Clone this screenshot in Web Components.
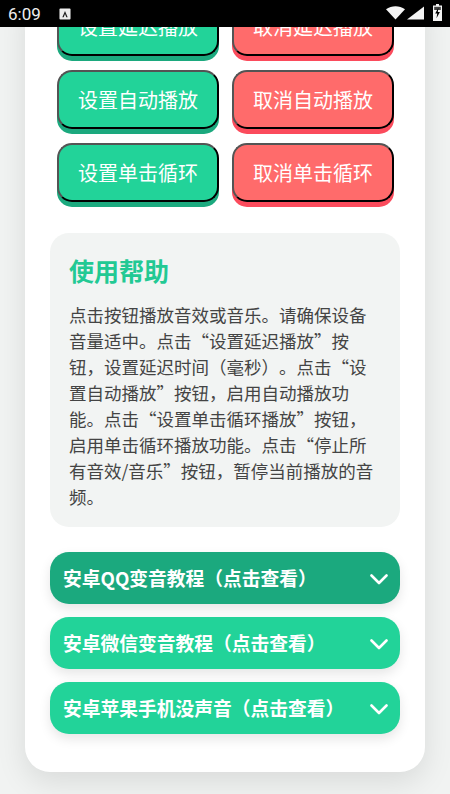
<!DOCTYPE html>
<html lang="zh-CN">
<head>
<meta charset="utf-8">
<title>音效</title>
<style>
  html, body { margin: 0; padding: 0; }
  body {
    width: 450px;
    height: 794px;
    overflow: hidden;
    background: #f1f3f2;
    font-family: "Noto Sans CJK SC", "Noto Sans", sans-serif;
    text-spacing-trim: space-all;
  }
</style>
</head>
<body>
<status-bar time="6:09"></status-bar>
<main-card>
  <div class="buttons" slot="buttons">
    <sound-button>设置延迟播放</sound-button>
    <sound-button kind="cancel">取消延迟播放</sound-button>
    <sound-button>设置自动播放</sound-button>
    <sound-button kind="cancel">取消自动播放</sound-button>
    <sound-button>设置单击循环</sound-button>
    <sound-button kind="cancel">取消单击循环</sound-button>
  </div>
  <help-panel heading="使用帮助" slot="help">点击按钮播放音效或音乐。请确保设备音量适中。点击“设置延迟播放”按钮，设置延迟时间（毫秒）。点击“设置自动播放”按钮，启用自动播放功能。点击“设置单击循环播放”按钮，启用单击循环播放功能。点击“停止所有音效/音乐”按钮，暂停当前播放的音频。</help-panel>
  <guide-item slot="guides" active>安卓QQ变音教程（点击查看）</guide-item>
  <guide-item slot="guides">安卓微信变音教程（点击查看）</guide-item>
  <guide-item slot="guides">安卓苹果手机没声音（点击查看）</guide-item>
</main-card>

<script>
class StatusBar extends HTMLElement {
  constructor() {
    super();
    const shadow = this.attachShadow({ mode: "open" });
    shadow.innerHTML = `
      <style>
        :host {
          display: flex;
          align-items: center;
          position: relative;
          z-index: 2;
          height: 27px;
          padding: 0 8px;
          background: #000;
          color: #eee;
          font: 400 17px Roboto, sans-serif;
        }
        .time { width: 51px; }
        .right { margin-left: auto; display: flex; align-items: center; }
        svg { display: block; }
      </style>
      <span class="time">${this.getAttribute("time")}</span>
      <svg width="12" height="12" viewBox="0 0 13 13">
        <rect x="0.5" y="0.5" width="12" height="12" rx="1" fill="#eee"/>
        <path d="M3.6 10 L6.5 3.2 L9.4 10 H7.9 L6.5 6.4 L5.1 10 Z" fill="#222"/>
      </svg>
      <div class="right">
        <svg width="38" height="14" viewBox="0 0 38 14" style="margin-right:9px;margin-top:-2px">
          <path d="M0 3.2 C5.6 -0.9 13.4 -0.9 19 3.2 L9.5 13.5 Z" fill="#f4f4f4"/>
          <path d="M38 0.5 V13.5 H21 Z" fill="#f4f4f4"/>
        </svg>
        <svg width="9" height="17" viewBox="0 0 9 17" style="margin-top:-2px">
          <path d="M3 0 H6 V1.5 H9 V17 H0 V1.5 H3 Z" fill="#f4f4f4"/>
          <rect x="1.2" y="2.8" width="6.6" height="3.2" fill="#444"/>
          <path d="M5.5 3.6 L2.2 9.6 H4.2 L3.5 14.2 L6.9 8 H4.8 Z" fill="#000"/>
        </svg>
      </div>
    `;
  }
}
customElements.define("status-bar", StatusBar);

class MainCard extends HTMLElement {
  constructor() {
    super();
    const shadow = this.attachShadow({ mode: "open" });
    shadow.innerHTML = `
      <style>
        :host {
          display: block;
          margin: 0 25px;
          padding: 0 25px 38px;
          box-sizing: border-box;
          background: #fff;
          border-radius: 0 0 25px 25px;
          box-shadow: 0 10px 30px rgba(0, 0, 0, 0.1);
        }
        .guides { display: flex; flex-direction: column; gap: 13px; margin-top: 25px; }
        ::slotted(.buttons) {
          display: grid;
          grid-template-columns: 162px 162px;
          justify-content: space-between;
          row-gap: 14px;
          margin: -29.5px 6px 0 7px;
        }
      </style>
      <slot name="buttons"></slot>
      <slot name="help"></slot>
      <div class="guides"><slot name="guides"></slot></div>
    `;
  }
}
customElements.define("main-card", MainCard);

class SoundButton extends HTMLElement {
  constructor() {
    super();
    const shadow = this.attachShadow({ mode: "open" });
    shadow.innerHTML = `
      <style>
        :host { display: block; }
        button {
          display: block;
          width: 100%;
          height: 58.75px;
          padding: 0;
          border: 2.5px outset #000;
          border-radius: 15px;
          background: #22d399;
          box-shadow: 0 5px 0 #1ba97e;
          color: #fff;
          font: 400 20px "Noto Sans CJK SC", sans-serif;
        }
        :host([kind="cancel"]) button {
          background: #ff6b6b;
          box-shadow: 0 5px 0 #fb4b5c;
        }
      </style>
      <button><slot></slot></button>
    `;
  }
}
customElements.define("sound-button", SoundButton);

class HelpPanel extends HTMLElement {
  constructor() {
    super();
    const shadow = this.attachShadow({ mode: "open" });
    shadow.innerHTML = `
      <style>
        :host {
          display: block;
          margin-top: 31.25px;
          padding: 18px 19px 17px;
          background: #f2f4f3;
          border-radius: 19px;
          color: #444;
          font-size: 17.5px;
          line-height: 26px;
        }
        h3 {
          margin: 0 0 13px;
          color: #22c994;
          font-size: 25px;
          line-height: 38px;
          font-weight: 700;
        }
      </style>
      <h3>${this.getAttribute("heading")}</h3>
      <slot></slot>
    `;
  }
}
customElements.define("help-panel", HelpPanel);

class GuideItem extends HTMLElement {
  constructor() {
    super();
    const shadow = this.attachShadow({ mode: "open" });
    shadow.innerHTML = `
      <style>
        :host {
          display: flex;
          align-items: center;
          justify-content: space-between;
          height: 52px;
          padding: 0 12px 0 13px;
          background: #22d399;
          border-radius: 19px;
          box-shadow: 0 5px 12px rgba(0, 0, 0, 0.1);
          color: #fff;
          font-size: 18.75px;
          font-weight: 700;
        }
        :host([active]) { background: #1ba97e; }
        span { padding-bottom: 2px; }
        svg { display: block; margin-top: 2px; }
      </style>
      <span><slot></slot></span>
      <svg width="18" height="11" viewBox="0 0 18 11" fill="none" stroke="#fff" stroke-width="2.6" stroke-linecap="round" stroke-linejoin="round">
        <path d="M1.5 1.5 L9 9 L16.5 1.5"/>
      </svg>
    `;
  }
}
customElements.define("guide-item", GuideItem);
</script>
</body>
</html>
